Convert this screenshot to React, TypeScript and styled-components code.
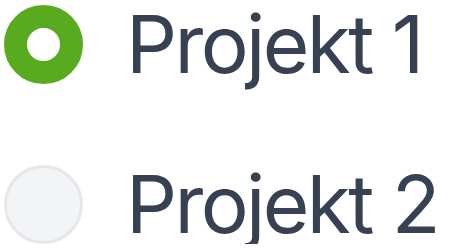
import styled, { createGlobalStyle } from "styled-components";

const GlobalStyle = createGlobalStyle`
  html, body {
    margin: 0;
    padding: 0;
    background: #ffffff;
  }
  body {
    font-family: Inter, "Noto Sans", sans-serif;
  }
`;

const Group = styled.div`
  display: flex;
  flex-direction: column;
  gap: 80px;
  padding: 4px 0 0 4px;
`;

const Option = styled.label`
  display: flex;
  align-items: center;
  height: 80px;
  cursor: pointer;
`;

const Radio = styled.span<{ $checked: boolean }>`
  box-sizing: border-box;
  width: 79px;
  height: 79px;
  border-radius: 50%;
  flex-shrink: 0;
  background: ${(p) => (p.$checked ? "#ffffff" : "#f3f4f6")};
  border: ${(p) => (p.$checked ? "23px solid #58ab1f" : "3px solid #e5e7eb")};
`;

const Label = styled.span`
  margin-left: 43px;
  font-size: 80px;
  line-height: 80px;
  letter-spacing: -2.6px;
  color: #374151;
  white-space: nowrap;
`;

const projects = [
  { name: "Projekt 1", checked: true },
  { name: "Projekt 2", checked: false },
];

export default function App() {
  return (
    <>
      <GlobalStyle />
      <Group>
        {projects.map((p) => (
          <Option key={p.name}>
            <Radio $checked={p.checked} />
            <Label>{p.name}</Label>
          </Option>
        ))}
      </Group>
    </>
  );
}
